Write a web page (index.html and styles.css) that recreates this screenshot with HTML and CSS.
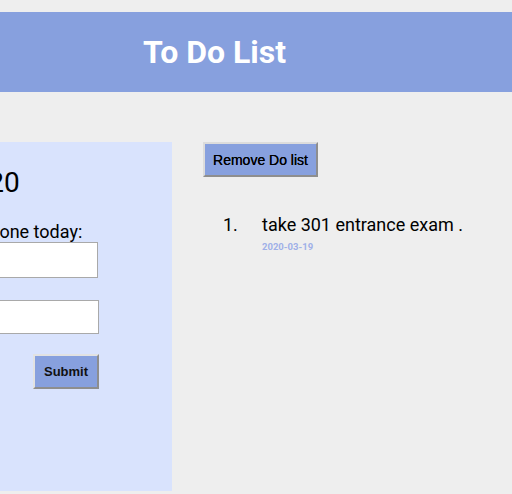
FILE: index.html
```html
<!DOCTYPE html>
<html>
<head>
<meta charset="utf-8">
<link rel="stylesheet" href="styles.css">
</head>
<body>
<header class="top-bar">
  <h1 class="title">To Do List</h1>
</header>
<main class="main">
  <section class="side-panel">
    <form class="todo-form">
      <h2 class="date-heading">Date: 2020-03-20</h2>
      <label class="form-label">What have you done today:</label>
      <input class="field field-first" type="text">
      <input class="field field-second" type="text">
      <button class="submit-btn" type="button">Submit</button>
    </form>
  </section>
  <section class="list-col">
    <button class="remove-btn" type="button">Remove Do list</button>
    <ol class="todo-list">
      <li class="todo-item">
        <span class="todo-num">1.</span>
        <div class="todo-body">
          <div class="todo-text">take 301 entrance exam .</div>
          <div class="todo-date">2020-03-19</div>
        </div>
      </li>
    </ol>
  </section>
</main>
</body>
</html>
```

FILE: styles.css
```css
html, body {
  margin: 0;
  padding: 0;
}
body {
  background: #eeeeee;
  font-family: Roboto, "Liberation Sans", sans-serif;
  width: 512px;
  height: 494px;
  overflow: hidden;
}
.top-bar {
  margin-top: 12px;
  height: 80px;
  background: #87a0de;
  display: flex;
  align-items: center;
  padding-left: 143px;
}
.title {
  margin: 0;
  font-size: 32px;
  font-weight: 700;
  color: #ffffff;
  line-height: 38px;
}
.main {
  display: flex;
  margin-top: 50px;
  gap: 31px;
}
.side-panel {
  width: 172px;
  height: 349px;
  background: #d9e3fd;
  overflow: hidden;
  flex: none;
}
.todo-form {
  display: flex;
  flex-direction: column;
  width: 260px;
  margin-left: -161px;
  padding-top: 24px;
}
.date-heading {
  margin: 0 0 22px -32px;
  font-size: 28px;
  font-weight: 400;
  line-height: 33px;
  color: #000;
  white-space: nowrap;
}
.form-label {
  margin-left: 29px;
  font-size: 18px;
  line-height: 21px;
  color: #000;
  white-space: nowrap;
}
.field {
  box-sizing: border-box;
  margin: 0;
  border: 1px solid #a9a9a9;
  background: #fff;
  padding: 0 6px;
  outline: none;
}
.field-first {
  width: 259px;
  height: 36px;
}
.field-second {
  width: 260px;
  height: 34px;
  margin-top: 22px;
}
.submit-btn {
  align-self: flex-end;
  margin-top: 20px;
  width: 66px;
  height: 35px;
  box-sizing: border-box;
  background: #87a0de;
  border-style: solid;
  border-width: 2px;
  border-color: #e2e2e2 #8e8e8e #8e8e8e #e2e2e2;
  font-family: "Liberation Sans", Arial, sans-serif;
  font-weight: 700;
  font-size: 13px;
  color: #111;
  padding: 0;
}
.list-col {
  display: flex;
  flex-direction: column;
  align-items: flex-start;
}
.remove-btn {
  width: 115px;
  height: 35px;
  box-sizing: border-box;
  background: #87a0de;
  border-style: solid;
  border-width: 2px;
  border-color: #dcdcdc #8e8e8e #8e8e8e #dcdcdc;
  font-family: "Liberation Sans", Arial, sans-serif;
  font-size: 14px;
  color: #000;
  padding: 0;
  text-shadow: 0 0 0.4px #000;
}
.todo-list {
  list-style: none;
  margin: 37px 0 0 0;
  padding: 0 0 0 20px;
}
.todo-item {
  display: flex;
}
.todo-num {
  width: 39px;
  font-size: 18px;
  line-height: 21px;
  color: #000;
}
.todo-text {
  font-size: 18px;
  line-height: 21px;
  color: #000;
}
.todo-date {
  margin-top: 6px;
  font-size: 9.5px;
  line-height: 12px;
  font-weight: 700;
  color: #9fb0e8;
}
```
